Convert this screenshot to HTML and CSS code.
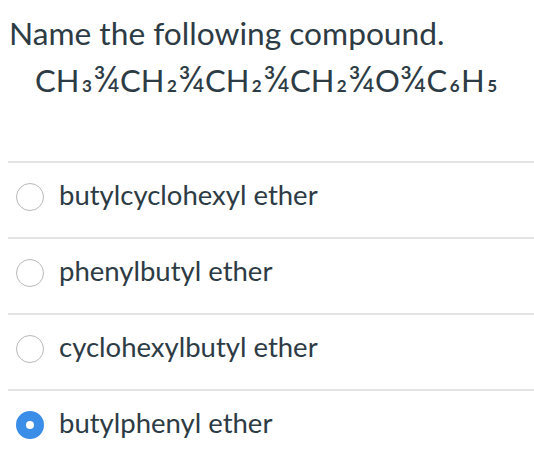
FILE: index.html
```html
<!DOCTYPE html>
<html>
<head>
<meta charset="utf-8">
<link rel="stylesheet" href="styles.css">
</head>
<body>
<div class="question">
  <div class="title">Name the following compound.</div>
  <div class="formula">CH<span class="sub">3</span><span class="dash">¾</span>CH<span class="sub">2</span><span class="dash">¾</span>CH<span class="sub">2</span><span class="dash">¾</span>CH<span class="sub">2</span><span class="dash">¾</span>O<span class="dash">¾</span>C<span class="sub">6</span>H<span class="sub">5</span></div>
</div>
<div class="answers">
  <div class="answer"><span class="radio"></span><span class="label">butylcyclohexyl ether</span></div>
  <div class="answer"><span class="radio"></span><span class="label">phenylbutyl ether</span></div>
  <div class="answer"><span class="radio"></span><span class="label">cyclohexylbutyl ether</span></div>
  <div class="answer"><span class="radio checked"></span><span class="label">butylphenyl ether</span></div>
</div>
</body>
</html>
```
FILE: styles.css
```css
html, body {
  margin: 0;
  padding: 0;
  background: #ffffff;
}
body {
  font-family: Lato, "Open Sans", sans-serif;
  color: #2d3b45;
}
.question {
  padding-left: 9px;
}
.title {
  font-size: 31.7px;
  line-height: 38px;
  padding-top: 14px;
}
.formula {
  font-size: 31px;
  line-height: 37px;
  margin-top: 10px;
  padding-left: 26px;
  margin-bottom: 62px;
}
.sub {
  font-size: 17px;
  font-weight: 700;
  line-height: 0;
  margin: 0 1.5px 0 2.5px;
}
.dash {
  font-size: 36px;
  line-height: 0;
}
.answers {
  margin-left: 8px;
}
.answer {
  border-top: 2px solid #e3e3e3;
  height: 68px;
  padding-bottom: 6px;
  display: flex;
  align-items: center;
  padding-left: 8px;
  gap: 15px;
}
.radio {
  width: 28px;
  height: 28px;
  box-sizing: border-box;
  border-radius: 50%;
  border: 1.5px solid #b9b9b9;
  background: #fff;
  flex: none;
}
.radio.checked {
  border: 10px solid #3b8ee8;
}
.label {
  font-size: 27.5px;
  line-height: 33px;
  padding-bottom: 5px;
}
```
